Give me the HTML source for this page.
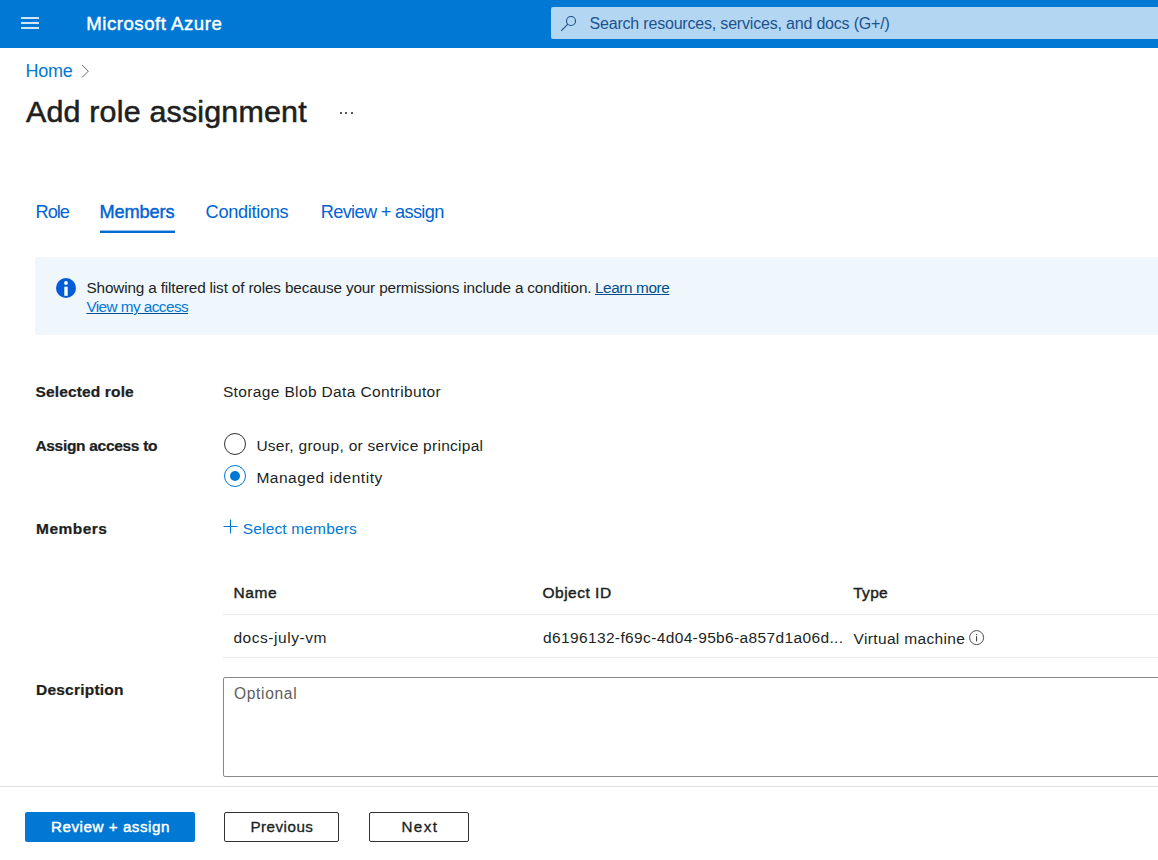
<!DOCTYPE html>
<html>
<head>
<meta charset="utf-8">
<title>Add role assignment - Microsoft Azure</title>
<style>
html,body{margin:0;padding:0;background:#fff;width:1158px;height:860px;overflow:hidden;position:relative}
body{font-family:"Liberation Sans",sans-serif;color:#201f1e}
.t{position:absolute;white-space:nowrap;line-height:1}
.shape{position:absolute}
/*HIDE*/
</style>
</head>
<body>
<!-- top bar -->
<div class="shape" style="left:0;top:0;width:1158px;height:48px;background:#0078d4"></div>
<div class="shape" style="left:21px;top:17.2px;width:18px;height:1.6px;background:#d2e5f6"></div>
<div class="shape" style="left:21px;top:22.2px;width:18px;height:1.6px;background:#d2e5f6"></div>
<div class="shape" style="left:21px;top:27.2px;width:18px;height:1.6px;background:#d2e5f6"></div>
<div class="shape" style="left:551px;top:7px;width:620px;height:32px;background:#b3d6f2;border-radius:2px"></div>
<svg class="shape" style="left:551px;top:7px" width="40" height="32" viewBox="0 0 40 32">
  <circle cx="20" cy="14" r="4.5" fill="none" stroke="#1d4f86" stroke-width="1.1"/>
  <line x1="10.2" y1="23.8" x2="16.8" y2="17.2" stroke="#1d4f86" stroke-width="1.1"/>
</svg>

<!-- breadcrumb chevron -->
<svg class="shape" style="left:81px;top:64px" width="9" height="15" viewBox="0 0 9 15"><polyline points="1,1 7.3,7.2 1,13.5" fill="none" stroke="#6b6967" stroke-width="1"/></svg>

<!-- more dots -->
<div class="shape" style="left:340px;top:112px;width:2px;height:2px;background:#201f1e;border-radius:1px"></div>
<div class="shape" style="left:345.3px;top:112px;width:2px;height:2px;background:#201f1e;border-radius:1px"></div>
<div class="shape" style="left:351px;top:112px;width:2px;height:2px;background:#201f1e;border-radius:1px"></div>

<!-- selected tab underline -->
<div class="shape" style="left:100px;top:230px;width:75px;height:1px;background:#8cbdea"></div><div class="shape" style="left:100px;top:231px;width:75px;height:2px;background:#006bd2"></div>

<!-- info bar -->
<div class="shape" style="left:35px;top:257px;width:1140px;height:78px;background:#eff6fc;border-radius:2px"></div>
<svg class="shape" style="left:56px;top:278px" width="20" height="20" viewBox="0 0 20 20">
  <circle cx="10" cy="10" r="10" fill="#015cda"/>
  <circle cx="10" cy="5" r="1.9" fill="#fff"/>
  <rect x="8.3" y="8.7" width="3.4" height="9.1" fill="#fff"/>
</svg>

<!-- radios -->
<div class="shape" style="left:224px;top:433px;width:22px;height:22px;box-sizing:border-box;border-radius:50%;border:1.4px solid #323130"></div>
<div class="shape" style="left:224px;top:465px;width:22px;height:22px;box-sizing:border-box;border-radius:50%;border:1.4px solid #0078d4"></div>
<div class="shape" style="left:230px;top:471px;width:10px;height:10px;border-radius:50%;background:#0078d4"></div>

<!-- plus -->
<svg class="shape" style="left:223px;top:519px" width="15" height="15" viewBox="0 0 15 15"><path d="M7.5 0.5V14.5M0.5 7.5H14.5" stroke="#0078d4" stroke-width="1.1" fill="none"/></svg>

<!-- table lines -->
<div class="shape" style="left:223px;top:614px;width:935px;height:1px;background:#edebe9"></div>
<div class="shape" style="left:223px;top:657px;width:935px;height:1px;background:#edebe9"></div>
<svg class="shape" style="left:969px;top:630px" width="16" height="16" viewBox="0 0 16 16">
  <circle cx="7.6" cy="7.6" r="7" fill="none" stroke="#4f4d4b" stroke-width="1"/>
  <circle cx="7.6" cy="4.6" r="0.7" fill="#323130"/>
  <rect x="7.1" y="6.2" width="1" height="5.2" fill="#323130"/>
</svg>

<!-- textarea -->
<div class="shape" style="left:223px;top:677px;width:960px;height:100px;box-sizing:border-box;border:1px solid #8a8886;border-radius:2px"></div>

<!-- footer separator -->
<div class="shape" style="left:0;top:786px;width:1158px;height:1px;background:#e1dfdd"></div>

<!-- buttons -->
<div class="shape" style="left:25px;top:812px;width:170px;height:30px;background:#0078d4;border-radius:2px"></div>
<div class="shape" style="left:224px;top:812px;width:115px;height:30px;box-sizing:border-box;border:1px solid #323130;border-radius:2px"></div>
<div class="shape" style="left:369px;top:812px;width:100px;height:30px;box-sizing:border-box;border:1px solid #323130;border-radius:2px"></div>

<div id="brand" class="t" style="left:86.30px;top:14.76px;font-size:18.6px;font-weight:400;-webkit-text-stroke:0.44px #fff;letter-spacing:0.523px;color:#fff;">Microsoft Azure</div>
<div id="search" class="t" style="left:589.50px;top:15.88px;font-size:16px;font-weight:400;letter-spacing:-0.191px;color:#1d5290;">Search resources, services, and docs (G+/)</div>
<div id="home" class="t" style="left:25.50px;top:62.10px;font-size:18px;font-weight:400;letter-spacing:-0.234px;color:#0078d4;">Home</div>
<div id="title" class="t" style="left:26.00px;top:95.77px;font-size:30.4px;font-weight:400;-webkit-text-stroke:0.56px #201f1e;letter-spacing:0.197px;color:#201f1e;">Add role assignment</div>
<div id="role" class="t" style="left:35.50px;top:203.27px;font-size:18.2px;font-weight:400;letter-spacing:-1.000px;color:#0064d2;">Role</div>
<div id="members_tab" class="t" style="left:99.40px;top:203.44px;font-size:18.2px;font-weight:400;-webkit-text-stroke:0.44px #0064d2;letter-spacing:-0.119px;color:#0064d2;">Members</div>
<div id="conditions" class="t" style="left:205.60px;top:203.27px;font-size:18.2px;font-weight:400;letter-spacing:-0.316px;color:#0064d2;">Conditions</div>
<div id="review_tab" class="t" style="left:320.80px;top:203.27px;font-size:18.2px;font-weight:400;letter-spacing:-0.677px;color:#0064d2;">Review + assign</div>
<div id="info" class="t" style="left:86.50px;top:280.05px;font-size:15.3px;font-weight:400;letter-spacing:-0.144px;color:#201f1e;">Showing a filtered list of roles because your permissions include a condition.</div>
<div id="learn" class="t" style="left:595.00px;top:280.05px;font-size:15.3px;font-weight:400;letter-spacing:-0.383px;color:#004e8c;text-decoration:underline;">Learn more</div>
<div id="viewaccess" class="t" style="left:86.40px;top:299.05px;font-size:15.3px;font-weight:400;letter-spacing:-0.548px;color:#0078d4;text-decoration:underline;text-decoration-color:#004e8c;">View my access</div>
<div id="selrole" class="t" style="left:35.50px;top:383.88px;font-size:15.5px;font-weight:700;-webkit-text-stroke:0.24px #201f1e;letter-spacing:0.143px;color:#201f1e;">Selected role</div>
<div id="storage" class="t" style="left:222.90px;top:383.88px;font-size:15.5px;font-weight:400;letter-spacing:0.364px;color:#201f1e;">Storage Blob Data Contributor</div>
<div id="assign" class="t" style="left:35.40px;top:437.88px;font-size:15.5px;font-weight:700;-webkit-text-stroke:0.24px #201f1e;letter-spacing:-0.304px;color:#201f1e;">Assign access to</div>
<div id="user" class="t" style="left:256.40px;top:437.88px;font-size:15.5px;font-weight:400;letter-spacing:0.270px;color:#201f1e;">User, group, or service principal</div>
<div id="managed" class="t" style="left:256.40px;top:469.88px;font-size:15.5px;font-weight:400;letter-spacing:0.519px;color:#201f1e;">Managed identity</div>
<div id="members_lbl" class="t" style="left:36.00px;top:520.88px;font-size:15.5px;font-weight:700;-webkit-text-stroke:0.24px #201f1e;letter-spacing:0.477px;color:#201f1e;">Members</div>
<div id="selmem" class="t" style="left:242.80px;top:520.88px;font-size:15.5px;font-weight:400;letter-spacing:0.156px;color:#0078d4;">Select members</div>
<div id="name" class="t" style="left:233.40px;top:584.88px;font-size:15.5px;font-weight:400;-webkit-text-stroke:0.44px #201f1e;letter-spacing:0.630px;color:#201f1e;">Name</div>
<div id="objid" class="t" style="left:542.50px;top:584.88px;font-size:15.5px;font-weight:400;-webkit-text-stroke:0.44px #201f1e;letter-spacing:0.499px;color:#201f1e;">Object ID</div>
<div id="type" class="t" style="left:853.20px;top:584.88px;font-size:15.5px;font-weight:400;-webkit-text-stroke:0.44px #201f1e;letter-spacing:0.315px;color:#201f1e;">Type</div>
<div id="docs" class="t" style="left:233.40px;top:629.88px;font-size:15.5px;font-weight:400;letter-spacing:0.545px;color:#201f1e;">docs-july-vm</div>
<div id="guid" class="t" style="left:543.00px;top:629.88px;font-size:15.5px;font-weight:400;letter-spacing:0.364px;color:#201f1e;">d6196132-f69c-4d04-95b6-a857d1a06d...</div>
<div id="vm" class="t" style="left:853.60px;top:630.88px;font-size:15.5px;font-weight:400;letter-spacing:0.342px;color:#201f1e;">Virtual machine</div>
<div id="desc" class="t" style="left:36.00px;top:681.88px;font-size:15.5px;font-weight:700;-webkit-text-stroke:0.24px #201f1e;letter-spacing:0.226px;color:#201f1e;">Description</div>
<div id="optional" class="t" style="left:234.00px;top:685.79px;font-size:15.6px;font-weight:400;letter-spacing:0.655px;color:#605e5c;">Optional</div>
<div id="btn_review" class="t" style="left:51.00px;top:818.79px;font-size:15.2px;font-weight:400;-webkit-text-stroke:0.44px #fff;letter-spacing:0.531px;color:#fff;">Review + assign</div>
<div id="previous" class="t" style="left:250.40px;top:818.79px;font-size:15.2px;font-weight:400;-webkit-text-stroke:0.32px #201f1e;letter-spacing:0.498px;color:#201f1e;">Previous</div>
<div id="next" class="t" style="left:401.40px;top:818.79px;font-size:15.2px;font-weight:400;-webkit-text-stroke:0.32px #201f1e;letter-spacing:1.465px;color:#201f1e;">Next</div>
</body>
</html>
